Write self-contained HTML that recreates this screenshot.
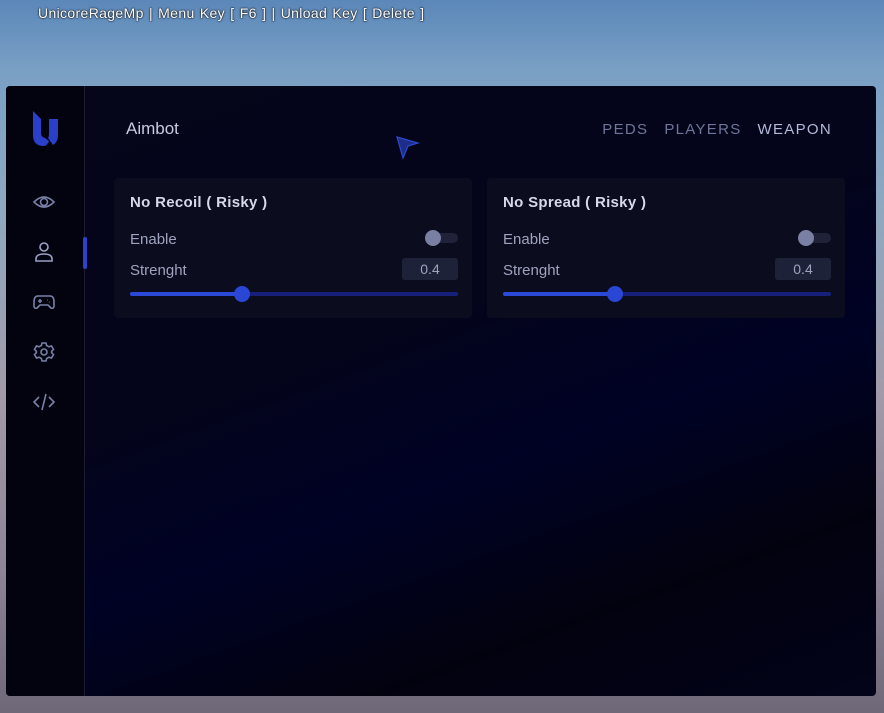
<!DOCTYPE html>
<html><head><meta charset="utf-8"><style>
*{margin:0;padding:0;box-sizing:border-box}
body{width:884px;height:713px;overflow:hidden;position:relative;font-family:"Liberation Sans",sans-serif;
background:linear-gradient(180deg,#5b87b9 0%,#7aa0c4 10%,#8fa8c0 30%,#a29aa8 55%,#8d8496 80%,#6e6878 100%);}
.top{position:absolute;left:38px;top:5px;color:#fff;font-size:14px;text-shadow:0 0 2px #000,0 0 1px #000;letter-spacing:0.35px;word-spacing:1px}
.panel{position:absolute;left:6px;top:86px;width:870px;height:610px;border-radius:4px;overflow:hidden;
background:linear-gradient(160deg,#05061a 0%,#04041a 40%,#000225 60%,#02020f 80%,#03031a 100%);}
.side{position:absolute;left:0;top:0;width:79px;height:100%;background:#03030f;border-right:1px solid #1c1d33}
.ind{position:absolute;left:77px;top:151px;width:4px;height:32px;background:#2a43c9;border-radius:2px}
.ic{position:absolute;left:26px;width:24px;height:24px}
.title{position:absolute;left:120px;top:33px;color:#c8cbe0;font-size:17px}
.tabs{position:absolute;right:44px;top:35px;font-size:15px;letter-spacing:1.3px;color:#6e7699}
.tabs span{margin-left:16px}
.card{position:absolute;top:92px;width:358px;height:140px;background:#0b0c1e;border-radius:4px}
.card h3{position:absolute;left:16px;top:16px;font-size:15px;color:#d7d9ea;font-weight:bold;letter-spacing:0.3px}
.lab{position:absolute;left:16px;font-size:15px;color:#9fa3bf}
.tg{position:absolute;right:14px;top:55px;width:30px;height:10px;border-radius:5px;background:#1f2238}
.tg:before{content:"";position:absolute;left:-3px;top:-3px;width:16px;height:16px;border-radius:50%;background:#7a80a3}
.val{position:absolute;right:14px;top:80px;width:56px;height:22px;background:#1e2238;border-radius:3px;color:#9fa3bf;font-size:14px;text-align:center;line-height:22px}
.tr{position:absolute;left:16px;right:14px;top:114px;height:4px;background:#16207a;border-radius:2px}
.fill{position:absolute;left:0;top:0;width:112px;height:4px;background:#2b48d6;border-radius:2px}
.knob{position:absolute;left:104px;top:-6px;width:16px;height:16px;border-radius:50%;background:#2a46d4}
</style></head><body>
<div class="top">UnicoreRageMp | Menu Key [ F6 ] | Unload Key [ Delete ]</div>
<div class="panel">
<div class="side">
<svg style="position:absolute;left:27px;top:25px" width="25" height="36" viewBox="0 0 25 36"><path d="M0 0 L8 8 L8 22 Q8 26 12 27 L16 30 Q14 35 11 35 Q0 35 0 24Z" fill="#2a40c8"/><path d="M16 8 H25 V24 Q25 31 20 34 L15 27 Q16 26 16 22Z" fill="#2a40c8"/></svg>
<svg class="ic" style="top:104px" viewBox="0 0 24 24" fill="none" stroke="#7880a6" stroke-width="1.6"><path d="M2 12 Q12 2 22 12 Q12 22 2 12Z"/><circle cx="12" cy="12" r="3.5"/></svg>
<svg class="ic" style="top:154px" viewBox="0 0 24 24" fill="none" stroke="#9aa0c4" stroke-width="1.6"><circle cx="12" cy="7" r="4"/><path d="M4 21 V19 Q4 14 12 14 Q20 14 20 19 V21Z"/></svg>
<svg class="ic" style="top:204px" viewBox="0 0 24 24" fill="none" stroke="#7880a6" stroke-width="1.6"><path d="M6 6 H18 Q22 6 22 12 V16 Q22 19 19 18 L16 15 H8 L5 18 Q2 19 2 16 V12 Q2 6 6 6Z"/><path d="M6 11 H10 M8 9 V13 M15 10 h0.5 M17 12 h0.5"/></svg>
<svg class="ic" style="top:254px" viewBox="0 0 24 24" fill="none" stroke="#7880a6" stroke-width="1.6"><circle cx="12" cy="12" r="3"/><path d="M10 3 H14 L14.6 5.5 L17 6.8 L19.5 6 L21.5 9.5 L19.6 11.3 V12.7 L21.5 14.5 L19.5 18 L17 17.2 L14.6 18.5 L14 21 H10 L9.4 18.5 L7 17.2 L4.5 18 L2.5 14.5 L4.4 12.7 V11.3 L2.5 9.5 L4.5 6 L7 6.8 L9.4 5.5Z"/></svg>
<svg class="ic" style="top:304px" viewBox="0 0 24 24" fill="none" stroke="#7880a6" stroke-width="1.6"><path d="M7 7 L2 12 L7 17 M17 7 L22 12 L17 17 M14 4 L10 20"/></svg>
</div>
<div class="ind"></div>
<div class="title">Aimbot</div>
<svg style="position:absolute;left:390px;top:50px" width="24" height="24" viewBox="0 0 24 24"><path d="M1 1 L22 7 L12 10 L7 22Z" fill="#1c2e8a" stroke="#2c4ad0" stroke-width="1.2"/></svg>
<div class="tabs"><span>PEDS</span><span>PLAYERS</span><span style="color:#b3b9d9">WEAPON</span></div>
<div class="card" style="left:108px"><h3>No Recoil ( Risky )</h3><div class="lab" style="top:53px">Enable</div><div class="tg"></div><div class="lab" style="top:84px">Strenght</div><div class="val">0.4</div><div class="tr"><div class="fill"></div><div class="knob"></div></div></div>
<div class="card" style="left:481px"><h3>No Spread ( Risky )</h3><div class="lab" style="top:53px">Enable</div><div class="tg"></div><div class="lab" style="top:84px">Strenght</div><div class="val">0.4</div><div class="tr"><div class="fill"></div><div class="knob"></div></div></div>
</div>
</body></html>
